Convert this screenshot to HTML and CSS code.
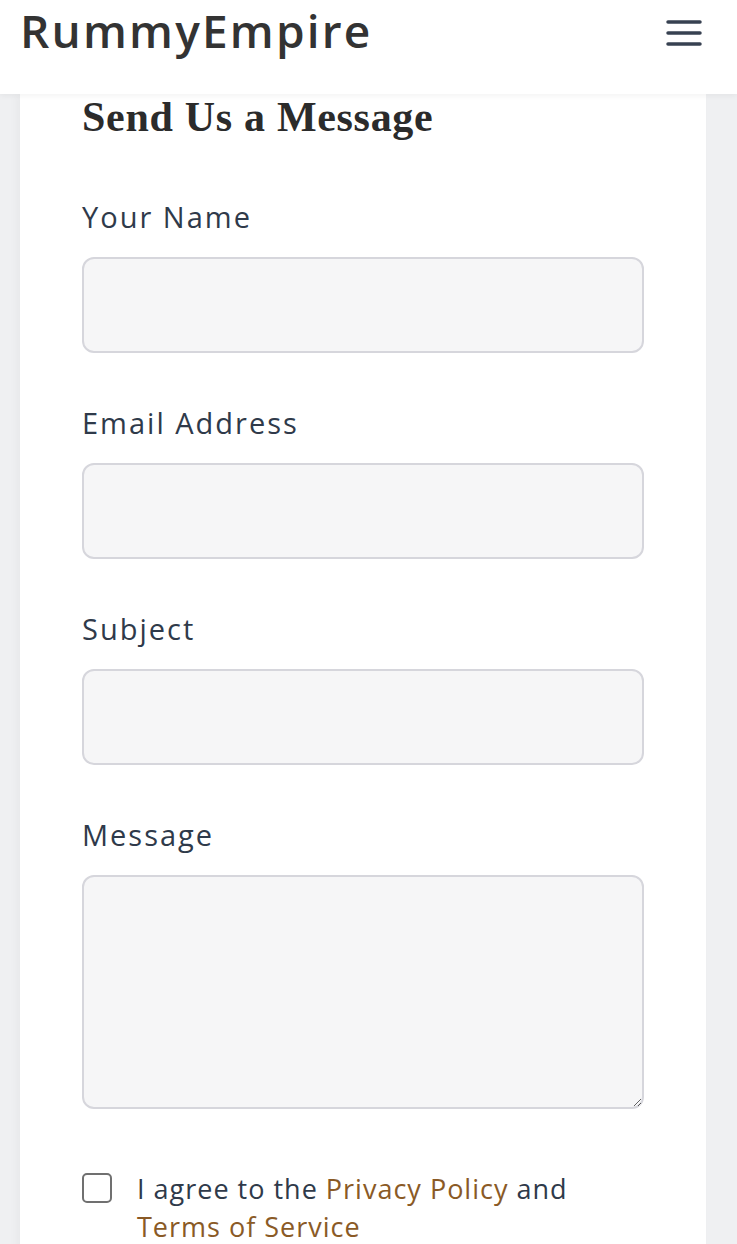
FILE: index.html
```html
<!DOCTYPE html>
<html lang="en">
<head>
<meta charset="utf-8">
<title>Contact - RummyEmpire</title>
<link rel="stylesheet" href="styles.css">
</head>
<body>
<header class="site-header">
  <a class="brand" href="#">RummyEmpire</a>
  <button class="menu-btn" aria-label="Menu">
    <svg width="36" height="28" viewBox="0 0 36 28"><g stroke="#374151" stroke-width="3.5" stroke-linecap="round"><line x1="2" y1="3" x2="34" y2="3"/><line x1="2" y1="14" x2="34" y2="14"/><line x1="2" y1="25" x2="34" y2="25"/></g></svg>
  </button>
</header>
<main class="page">
  <section class="card">
    <h2 class="card-title">Send Us a Message</h2>
    <form class="form">
      <div class="field">
        <label class="field-label" for="name">Your Name</label>
        <input class="field-input" id="name" type="text">
      </div>
      <div class="field">
        <label class="field-label" for="email">Email Address</label>
        <input class="field-input" id="email" type="email">
      </div>
      <div class="field">
        <label class="field-label" for="subject">Subject</label>
        <input class="field-input" id="subject" type="text">
      </div>
      <div class="field">
        <label class="field-label" for="message">Message</label>
        <textarea class="field-input field-textarea" id="message"></textarea>
      </div>
      <div class="agree">
        <input class="agree-box" type="checkbox" id="agree">
        <label class="agree-text" for="agree">I agree to the <a href="#">Privacy Policy</a> and <a href="#">Terms of Service</a></label>
      </div>
    </form>
  </section>
</main>
</body>
</html>
```
FILE: styles.css
```css
* { box-sizing: border-box; }
html, body { margin: 0; padding: 0; }
body {
  background: #eff0f2;
  font-family: "Open Sans", "Noto Sans", sans-serif;
  color: #333;
  height: 1244px;
  overflow: hidden;
}
.site-header {
  position: relative;
  z-index: 2;
  height: 94px;
  background: #fff;
  display: flex;
  align-items: flex-start;
  justify-content: space-between;
  padding: 2px 35px 0 20px;
  box-shadow: 0 2px 6px rgba(0,0,0,0.05);
}
.brand {
  font-family: "Open Sans", sans-serif;
  font-weight: 600;
  font-size: 46px;
  line-height: 56px;
  color: #333;
  text-decoration: none;
  letter-spacing: 2.2px;
}
.menu-btn {
  background: none;
  border: 0;
  padding: 0;
  margin-top: 17px;
  width: 36px;
  height: 28px;
  display: block;
}
.page {
  padding: 0 31px 0 20px;
}
.card {
  background: #fff;
  padding: 0 62px 40px 62px;
  box-shadow: -4px 0 8px rgba(0,0,0,0.03);
}
.card-title {
  margin: 0;
  padding-top: 0;
  font-family: "Liberation Serif", serif;
  font-weight: 700;
  font-size: 42px;
  line-height: 46px;
  letter-spacing: 0.7px;
  color: #2b2b2b;
}
.form { margin-top: 56px; }
.field { margin-bottom: 49px; }
.field-label {
  display: block;
  font-size: 29px;
  line-height: 42px;
  letter-spacing: 2px;
  margin-bottom: 19px;
  color: #2f3a4a;
}
.field-input {
  display: block;
  width: 100%;
  height: 96px;
  border: 2px solid #d6d6dc;
  border-radius: 12px;
  background: #f6f6f7;
  font: inherit;
}
.field-textarea { height: 234px; resize: vertical; }
.agree {
  display: flex;
  align-items: flex-start;
  gap: 25px;
  margin-top: 61px;
}
.agree-box {
  appearance: none;
  -webkit-appearance: none;
  flex: none;
  width: 30px;
  height: 30px;
  margin: 3px 0 0 0;
  border: 2px solid #707070;
  border-radius: 5px;
  background: #fff;
}
.agree-text {
  font-size: 27px;
  line-height: 38px;
  letter-spacing: 1px;
  color: #2f3a4a;
}
.agree-text a { color: #8a5a26; text-decoration: none; }
```
